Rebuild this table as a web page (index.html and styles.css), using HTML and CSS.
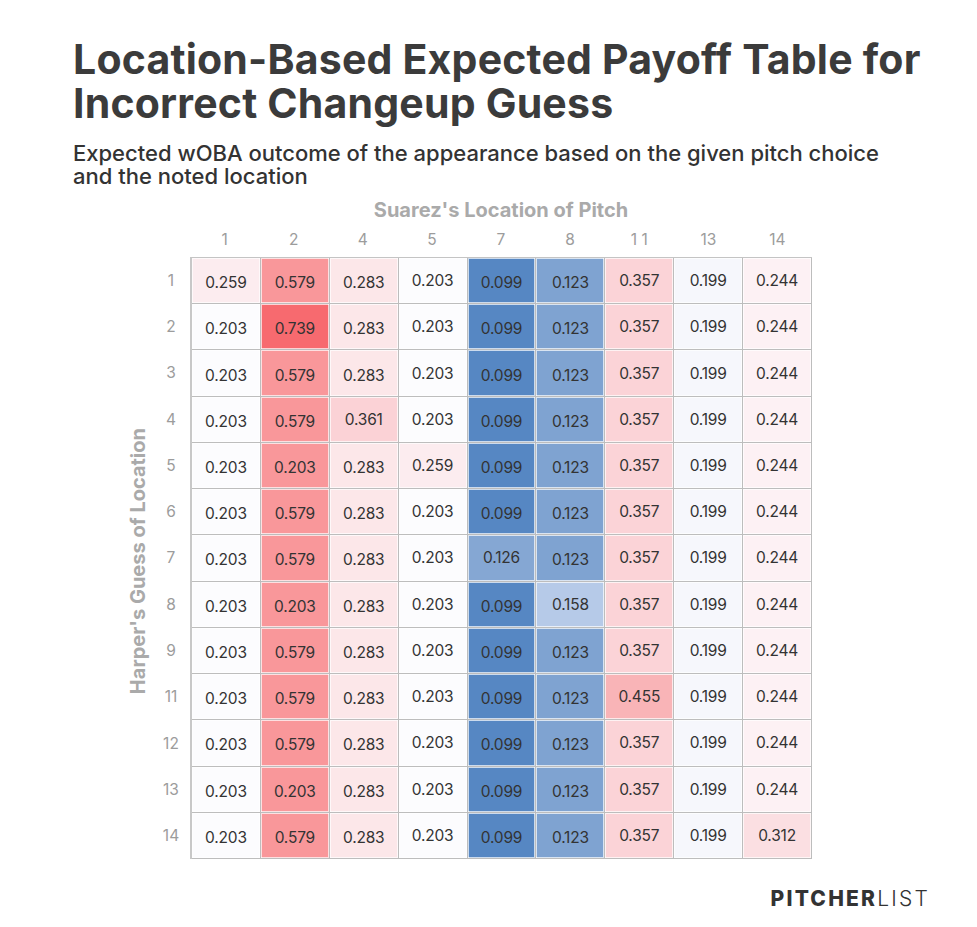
FILE: index.html
```html
<!DOCTYPE html>
<html lang="en">
<head>
<meta charset="utf-8">
<title>Location-Based Expected Payoff Table for Incorrect Changeup Guess</title>
<link rel="stylesheet" href="styles.css">
</head>
<body>
<div class="page">
  <header class="head">
    <h1 class="title">Location-Based Expected Payoff Table for Incorrect Changeup Guess</h1>
    <p class="subtitle">Expected wOBA outcome of the appearance based on the given pitch choice and the noted location</p>
  </header>
  <div class="chart">
    <div class="yaxis"><span class="ytitle">Harper's Guess of Location</span></div>
    <div class="plot">
      <div class="xtitle">Suarez's Location of Pitch</div>
      <div class="xlabels">
        <span>1</span><span>2</span><span>4</span><span>5</span><span>7</span><span>8</span><span>1 1</span><span>13</span><span>14</span>
      </div>
      <div class="body">
        <div class="ylabels">
          <span>1</span><span>2</span><span>3</span><span>4</span><span>5</span><span>6</span><span>7</span><span>8</span><span>9</span><span>11</span><span>12</span><span>13</span><span>14</span>
        </div>
        <div class="grid">
          <div class="c v259">0.259</div><div class="c v579">0.579</div><div class="c v283">0.283</div><div class="c v203 up">0.203</div><div class="c v099">0.099</div><div class="c v123">0.123</div><div class="c v357 up">0.357</div><div class="c v199 up">0.199</div><div class="c v244 up">0.244</div>
          <div class="c v203">0.203</div><div class="c v739">0.739</div><div class="c v283">0.283</div><div class="c v203 up">0.203</div><div class="c v099">0.099</div><div class="c v123">0.123</div><div class="c v357 up">0.357</div><div class="c v199 up">0.199</div><div class="c v244 up">0.244</div>
          <div class="c v203">0.203</div><div class="c v579">0.579</div><div class="c v283">0.283</div><div class="c v203 up">0.203</div><div class="c v099">0.099</div><div class="c v123">0.123</div><div class="c v357 up">0.357</div><div class="c v199 up">0.199</div><div class="c v244 up">0.244</div>
          <div class="c v203">0.203</div><div class="c v579">0.579</div><div class="c v361 up">0.361</div><div class="c v203 up">0.203</div><div class="c v099">0.099</div><div class="c v123">0.123</div><div class="c v357 up">0.357</div><div class="c v199 up">0.199</div><div class="c v244 up">0.244</div>
          <div class="c v203">0.203</div><div class="c v579">0.203</div><div class="c v283">0.283</div><div class="c v259 up">0.259</div><div class="c v099">0.099</div><div class="c v123">0.123</div><div class="c v357 up">0.357</div><div class="c v199 up">0.199</div><div class="c v244 up">0.244</div>
          <div class="c v203">0.203</div><div class="c v579">0.579</div><div class="c v283">0.283</div><div class="c v203 up">0.203</div><div class="c v099">0.099</div><div class="c v123">0.123</div><div class="c v357 up">0.357</div><div class="c v199 up">0.199</div><div class="c v244 up">0.244</div>
          <div class="c v203">0.203</div><div class="c v579">0.579</div><div class="c v283">0.283</div><div class="c v203 up">0.203</div><div class="c v126 up">0.126</div><div class="c v123">0.123</div><div class="c v357 up">0.357</div><div class="c v199 up">0.199</div><div class="c v244 up">0.244</div>
          <div class="c v203">0.203</div><div class="c v579">0.203</div><div class="c v283">0.283</div><div class="c v203 up">0.203</div><div class="c v099">0.099</div><div class="c v158 up">0.158</div><div class="c v357 up">0.357</div><div class="c v199 up">0.199</div><div class="c v244 up">0.244</div>
          <div class="c v203">0.203</div><div class="c v579">0.579</div><div class="c v283">0.283</div><div class="c v203 up">0.203</div><div class="c v099">0.099</div><div class="c v123">0.123</div><div class="c v357 up">0.357</div><div class="c v199 up">0.199</div><div class="c v244 up">0.244</div>
          <div class="c v203">0.203</div><div class="c v579">0.579</div><div class="c v283">0.283</div><div class="c v203 up">0.203</div><div class="c v099">0.099</div><div class="c v123">0.123</div><div class="c v455 up">0.455</div><div class="c v199 up">0.199</div><div class="c v244 up">0.244</div>
          <div class="c v203">0.203</div><div class="c v579">0.579</div><div class="c v283">0.283</div><div class="c v203 up">0.203</div><div class="c v099">0.099</div><div class="c v123">0.123</div><div class="c v357 up">0.357</div><div class="c v199 up">0.199</div><div class="c v244 up">0.244</div>
          <div class="c v203">0.203</div><div class="c v579">0.203</div><div class="c v283">0.283</div><div class="c v203 up">0.203</div><div class="c v099">0.099</div><div class="c v123">0.123</div><div class="c v357 up">0.357</div><div class="c v199 up">0.199</div><div class="c v244 up">0.244</div>
          <div class="c v203">0.203</div><div class="c v579">0.579</div><div class="c v283">0.283</div><div class="c v203 up">0.203</div><div class="c v099">0.099</div><div class="c v123">0.123</div><div class="c v357 up">0.357</div><div class="c v199 up">0.199</div><div class="c v312 up">0.312</div>
        </div>
      </div>
    </div>
  </div>
  <footer class="foot">
    <div class="logo"><span class="logo-b">PITCHER</span><span class="logo-l">LIST</span></div>
  </footer>
</div>
</body>
</html>
```
FILE: styles.css
```css
* { box-sizing: border-box; }
html, body { margin: 0; padding: 0; background: #ffffff; }
body { font-family: Inter, "Liberation Sans", sans-serif; color: #3a3a3a; }

.page { width: 977px; height: 927px; padding: 37px 0 0 0; }

.head { padding-left: 73px; }
.title {
  margin: 0;
  font-size: 41px;
  line-height: 44px;
  font-weight: 700;
  letter-spacing: 0.2px;
  color: #3b3b3b;
}
.subtitle {
  margin: 17px 0 0 0;
  width: 820px;
  font-size: 22px;
  line-height: 23px;
  font-weight: 500;
  letter-spacing: 0;
  color: #333;
}

.chart { display: flex; margin-top: 9px; padding-left: 119px; }
.yaxis { width: 38px; display: flex; align-items: center; justify-content: center; padding-top: 66px; }
.ytitle {
  writing-mode: vertical-rl;
  transform: rotate(180deg);
  font-size: 20px;
  font-weight: 700;
  color: #aaaaaa;
  letter-spacing: 0;
  white-space: nowrap;
}

.plot { display: flex; flex-direction: column; }
.xtitle {
  margin-left: 33px;
  width: 622px;
  text-align: center;
  font-size: 20px;
  line-height: 26px;
  font-weight: 700;
  color: #aaaaaa;
  letter-spacing: 0;
}
.xlabels {
  margin-left: 33px;
  width: 622px;
  display: grid;
  grid-template-columns: repeat(9, 1fr);
  height: 34px;
  padding-bottom: 2px;
  align-items: center;
  font-size: 15.5px;
  color: #9c9c9c;
  text-align: center;
}

.body { display: flex; }
.ylabels {
  width: 33px;
  display: grid;
  grid-template-rows: repeat(13, 1fr);
  height: 602px;
  align-items: center;
  font-size: 15.5px;
  color: #9c9c9c;
  text-align: center;
  padding-right: 5px;
}

.grid {
  width: 622px;
  height: 602px;
  display: grid;
  grid-template-columns: repeat(9, 1fr);
  grid-template-rows: repeat(13, 1fr);
  border-top: 1px solid #c4c4c4;
  border-left: 2px solid #c8c8c8;
}
.c {
  display: flex;
  align-items: center;
  justify-content: center;
  border-right: 1px solid #bdbdbd;
  border-bottom: 1px solid #bdbdbd;
  box-shadow: inset 1px 1px 0 rgba(255,255,255,0.7), inset -1px -1px 0 rgba(255,255,255,0.7);
  font-size: 15.5px;
  color: #333;
  padding-top: 4px;
  letter-spacing: -0.2px;
}
.c.up { padding-top: 0; }

.v203 { background: #fcfcfe; }
.v259 { background: #fcecef; }
.v283 { background: #fce7e9; }
.v579 { background: #f9979a; }
.v739 { background: #f76a6f; }
.v361 { background: #fbd2d6; }
.v357 { background: #fbd3d7; }
.v455 { background: #f9b4b7; }
.v312 { background: #fbdfe2; }
.v244 { background: #fdf1f4; }
.v199 { background: #f6f7fc; }
.v099 { background: #5687c3; }
.v123 { background: #7fa3d1; }
.v126 { background: #85a7d3; }
.v158 { background: #b6cae8; }

.foot { display: flex; justify-content: flex-end; padding-right: 47px; margin-top: 28px; }
.logo { font-size: 21px; line-height: 24px; color: #333; letter-spacing: 2.2px; }
.logo-b { font-weight: 800; }
.logo-l { font-weight: 300; }
```
